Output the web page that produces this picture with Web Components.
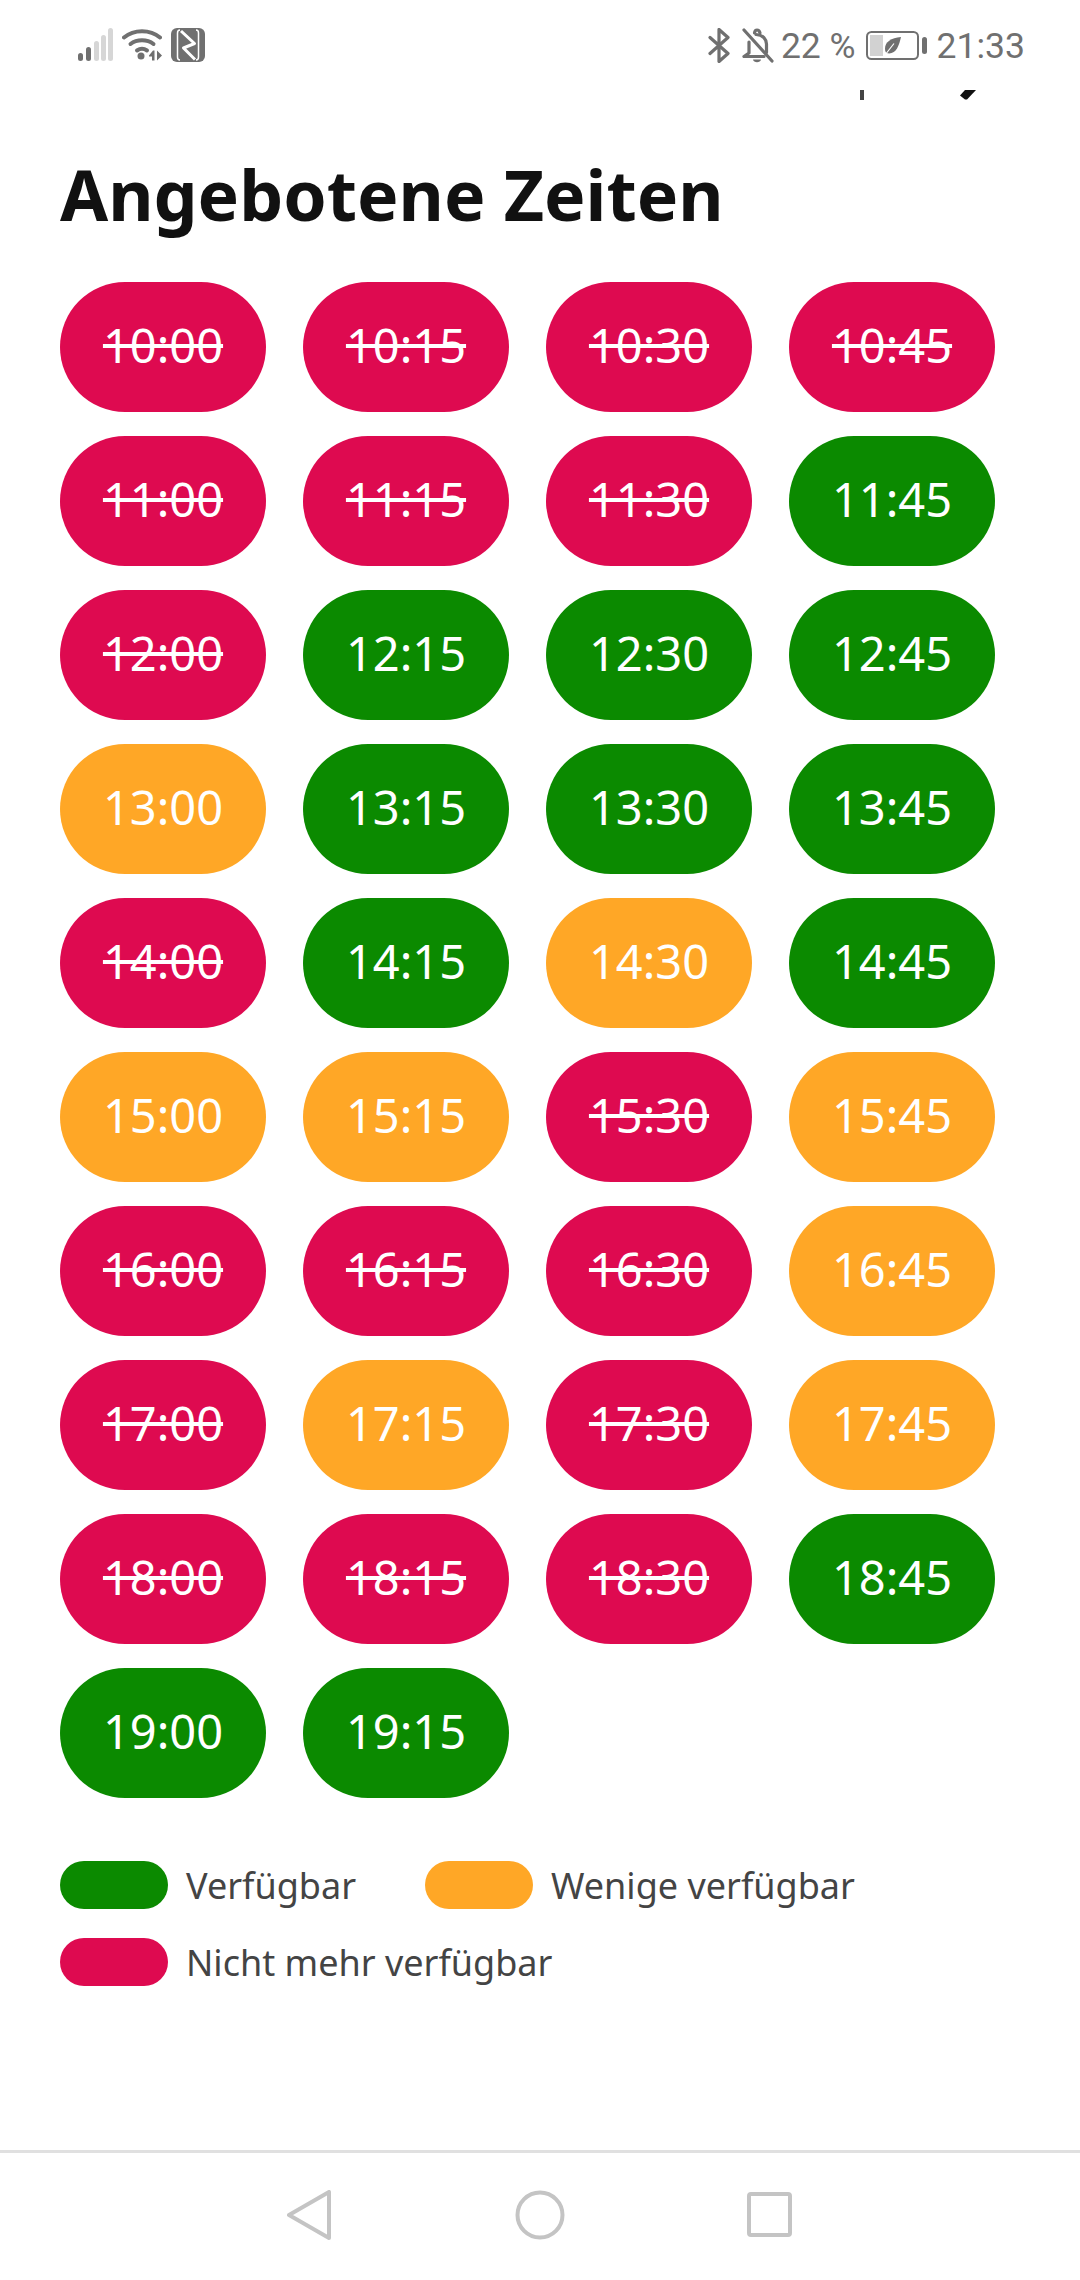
<!DOCTYPE html>
<html lang="de">
<head>
<meta charset="utf-8">
<title>Angebotene Zeiten</title>
<style>
  html, body { margin: 0; background: #fff; }
  body { width: 1080px; height: 2280px; overflow: hidden; display: flex; flex-direction: column; font-family: "Noto Sans", sans-serif; }
</style>
</head>
<body>
<phone-status></phone-status>
<scroll-remnant></scroll-remnant>
<time-board heading="Angebotene Zeiten">
  <time-slot state="gone">10:00</time-slot><time-slot state="gone">10:15</time-slot><time-slot state="gone">10:30</time-slot><time-slot state="gone">10:45</time-slot>
  <time-slot state="gone">11:00</time-slot><time-slot state="gone">11:15</time-slot><time-slot state="gone">11:30</time-slot><time-slot state="open">11:45</time-slot>
  <time-slot state="gone">12:00</time-slot><time-slot state="open">12:15</time-slot><time-slot state="open">12:30</time-slot><time-slot state="open">12:45</time-slot>
  <time-slot state="few">13:00</time-slot><time-slot state="open">13:15</time-slot><time-slot state="open">13:30</time-slot><time-slot state="open">13:45</time-slot>
  <time-slot state="gone">14:00</time-slot><time-slot state="open">14:15</time-slot><time-slot state="few">14:30</time-slot><time-slot state="open">14:45</time-slot>
  <time-slot state="few">15:00</time-slot><time-slot state="few">15:15</time-slot><time-slot state="gone">15:30</time-slot><time-slot state="few">15:45</time-slot>
  <time-slot state="gone">16:00</time-slot><time-slot state="gone">16:15</time-slot><time-slot state="gone">16:30</time-slot><time-slot state="few">16:45</time-slot>
  <time-slot state="gone">17:00</time-slot><time-slot state="few">17:15</time-slot><time-slot state="gone">17:30</time-slot><time-slot state="few">17:45</time-slot>
  <time-slot state="gone">18:00</time-slot><time-slot state="gone">18:15</time-slot><time-slot state="gone">18:30</time-slot><time-slot state="open">18:45</time-slot>
  <time-slot state="open">19:00</time-slot><time-slot state="open">19:15</time-slot>
</time-board>
<slot-legend></slot-legend>
<nav-keys></nav-keys>

<script>
  const shadow = (el, html) => { el.attachShadow({ mode: 'open' }).innerHTML = html; };

  // Android status bar: radios on the left, bluetooth/bell/battery/clock on the right.
  customElements.define('phone-status', class extends HTMLElement {
    connectedCallback() {
      shadow(this, `
      <style>
        :host { display: flex; flex: none; height: 90px; box-sizing: border-box; padding: 28px 55px 0 78px; justify-content: space-between; align-items: flex-start; color: #707070; font: 35.500px/36px Roboto, sans-serif; }
        .side { display: flex; align-items: flex-start; }
        svg { display: block; flex: none; }
        .pct { margin-left: 7px; }
        .clock { margin-left: 10px; }
      </style>
      <div class="side">
        <svg width="35" height="33" viewBox="0 0 35 33">
          <g fill="#707070"><rect x="0" y="25" width="5" height="8" rx="2.5"/><rect x="8" y="19" width="5" height="14" rx="2.5"/></g>
          <g fill="#d6d6d6"><rect x="16" y="13" width="5" height="20" rx="2.5"/><rect x="23" y="7" width="5" height="26" rx="2.5"/><rect x="30" y="0" width="5" height="33" rx="2.5"/></g>
        </svg>
        <svg style="margin-left:9px" width="40" height="33" viewBox="0 0 40 33">
          <g fill="none" stroke="#707070" stroke-width="4" stroke-linecap="round">
            <path d="M2 9.5C12 1 28 1 38 9.5"/><path d="M8.500 16C15 11 25 11 31.500 16"/><path d="M15 22.500C18 20.500 22 20.500 25 22.500"/>
          </g>
          <circle cx="19" cy="28" r="3.500" fill="#707070"/>
          <path d="M27 27.500l4-5h1.500v10H30V28.500h-3zM35 22.500l5 5-5 5z" fill="#707070"/>
        </svg>
        <svg style="margin-left:9px" width="34" height="34" viewBox="0 0 34 34">
          <rect width="34" height="34" rx="6" fill="#707070"/>
          <g fill="none" stroke="#fff" stroke-linejoin="round">
            <path d="M9 2Q6.500 2 6.500 5V29Q6.500 32 9 32" stroke-width="1.500"/>
            <path d="M25 2Q27.500 2 27.500 5V29Q27.500 32 25 32" stroke-width="1.500"/>
            <path d="M10 3L23.500 15.500L12.500 20L24 31.500" stroke-width="3"/>
          </g>
        </svg>
      </div>
      <div class="side">
        <svg width="22" height="35" viewBox="0 0 22 35">
          <path d="M2 9.500L20 25.500L11 33.500V1.500L20 9.500L2 25.500" fill="none" stroke="#707070" stroke-width="3.200" stroke-linecap="round" stroke-linejoin="round"/>
        </svg>
        <svg style="margin-left:12px" width="32" height="35" viewBox="0 0 32 35">
          <g fill="none" stroke="#707070" stroke-width="3.200" stroke-linecap="round" stroke-linejoin="round">
            <path d="M14 6.500C21 6.500 24.500 11.500 24.500 16V24.500"/>
            <path d="M7 14V25L2 28.500H22"/>
            <path d="M2 2L30 33"/>
            <path d="M12.500 5C13 1 17 1 18 5"/>
          </g>
          <path d="M11 31.500H19C18.500 35 11.500 35 11 31.500Z" fill="#707070"/>
        </svg>
        <span class="pct">22 %</span>
        <svg style="margin-left:10px;margin-top:3px" width="61" height="29" viewBox="0 0 61 29">
          <rect x="1" y="1" width="51" height="27" rx="4.500" fill="none" stroke="#707070" stroke-width="2"/>
          <rect x="4" y="4" width="13" height="21" fill="#d2d2d2"/>
          <rect x="56" y="6" width="5" height="17" rx="2.500" fill="#707070"/>
          <path d="M35 6C25 7 19 11 19 17.500C19 19.500 19.500 21 20.500 22C25 23.500 29 21 31 17.500C33 14 34 10 35 6Z" fill="#707070"/>
          <path d="M19 24L28 12.500" stroke="#fff" stroke-width="1.200" fill="none"/>
        </svg>
        <span class="clock">21:33</span>
      </div>`);
    }
  });

  // Bits of the scrolled-away row that still peek out under the status bar.
  customElements.define('scroll-remnant', class extends HTMLElement {
    connectedCallback() {
      shadow(this, `
      <style>
        :host { display: flex; flex: none; height: 10px; box-sizing: border-box; padding-left: 860px; align-items: flex-start; }
        .bar { width: 4px; height: 10px; background: #444; }
        svg { display: block; margin-left: 96px; }
      </style>
      <div class="bar"></div>
      <svg width="16" height="10" viewBox="0 0 16 10"><path d="M5 0H16L7 9.500H5L0 5.500Z" fill="#111"/></svg>`);
    }
  });

  // Heading plus the four-column grid of slots.
  customElements.define('time-board', class extends HTMLElement {
    connectedCallback() {
      shadow(this, `
      <style>
        :host { display: block; flex: none; padding: 48px 0 0 60px; }
        h2 { margin: 0 0 42px; font: 700 69.700px/92px "Noto Sans", sans-serif; color: #111; }
        .grid { display: grid; grid-template-columns: repeat(4, 206px); column-gap: 37px; row-gap: 24px; }
      </style>
      <h2>${this.getAttribute('heading')}</h2>
      <div class="grid"><slot></slot></div>`);
    }
  });

  // One bookable time; taken times are struck through.
  customElements.define('time-slot', class extends HTMLElement {
    connectedCallback() {
      shadow(this, `
      <style>
        :host { display: flex; height: 130px; box-sizing: border-box; padding-bottom: 3px; border-radius: 65px; align-items: center; justify-content: center; color: #fff; font: 47px/1 "Noto Sans", sans-serif; background: #0b8a00; }
        :host([state="few"]) { background: #ffa726; }
        :host([state="gone"]) { background: #de0a50; text-decoration: line-through; text-decoration-thickness: 4px; }
      </style>
      <slot></slot>`);
    }
  });

  // Colour key under the grid.
  customElements.define('legend-item', class extends HTMLElement {
    connectedCallback() {
      shadow(this, `
      <style>
        :host { display: flex; align-items: flex-start; gap: 18px; color: #444; font: 36px/50px "Noto Sans", sans-serif; height: 48px; }
        i { flex: none; width: 108px; height: 48px; border-radius: 24px; background: var(--c); }
      </style>
      <i></i><span><slot></slot></span>`);
    }
  });

  customElements.define('slot-legend', class extends HTMLElement {
    connectedCallback() {
      shadow(this, `
      <style>
        :host { display: flex; flex: none; flex-direction: column; padding: 63px 0 0 60px; gap: 29px; }
        .row { display: flex; gap: 69px; }
      </style>
      <div class="row">
        <legend-item style="--c:#0b8a00">Verfügbar</legend-item>
        <legend-item style="--c:#ffa726">Wenige verfügbar</legend-item>
      </div>
      <div class="row">
        <legend-item style="--c:#de0a50">Nicht mehr verfügbar</legend-item>
      </div>`);
    }
  });

  // Android back / home / recents keys.
  customElements.define('nav-keys', class extends HTMLElement {
    connectedCallback() {
      shadow(this, `
      <style>
        :host { display: flex; flex: none; margin-top: auto; height: 130px; box-sizing: border-box; border-top: 3px solid #e0e0e0; padding: 37px 0 0 287px; align-items: flex-start; }
        svg { display: block; fill: none; stroke: #c4c4c4; stroke-width: 4; stroke-linejoin: round; }
      </style>
      <svg width="44" height="50" viewBox="0 0 44 50"><path d="M2 25L42 2V48Z"/></svg>
      <svg style="margin-left:184px" width="50" height="50" viewBox="0 0 50 50"><circle cx="25" cy="25" r="22.500"/></svg>
      <svg style="margin-left:182px;margin-top:2px" width="45" height="45" viewBox="0 0 45 45"><rect x="2" y="2" width="41" height="41" rx="2"/></svg>`);
    }
  });
</script>
</body>
</html>
